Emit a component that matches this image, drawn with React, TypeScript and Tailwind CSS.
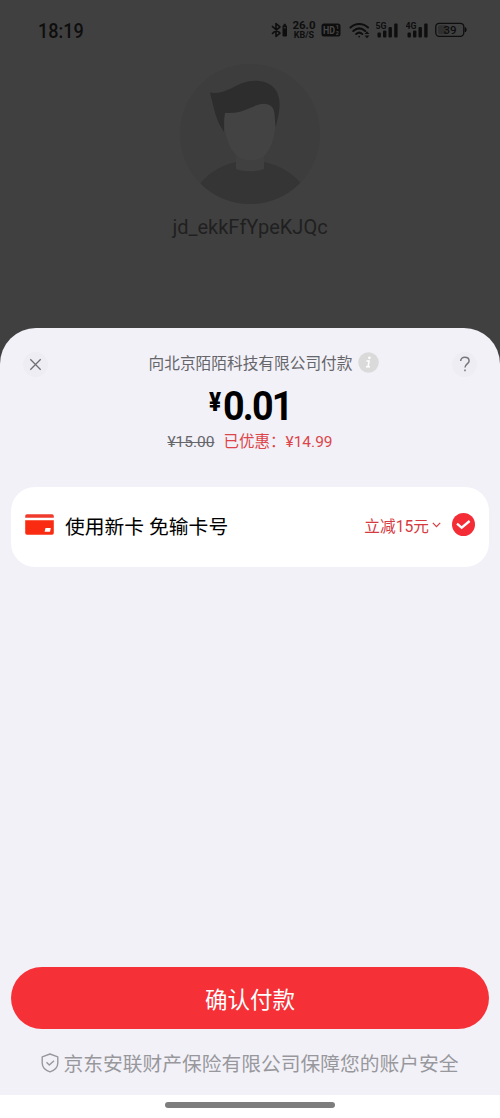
import React from 'react';

const SignalBars: React.FC<{ label: string }> = ({ label }) => (
  <svg width="22" height="18" viewBox="0 0 22 18" fill="#0e0e0e" className="block">
    <text x="-0.5" y="7.5" fontSize="9.5" fontWeight="700" fontFamily="Roboto, sans-serif" textLength="11" lengthAdjust="spacingAndGlyphs">{label}</text>
    <rect x="1.5" y="11.5" width="3.4" height="5" rx="1" />
    <rect x="7" y="9.5" width="3.4" height="7" rx="1" />
    <rect x="12.5" y="6" width="3.4" height="10.5" rx="1" />
    <rect x="18.2" y="2.5" width="3.4" height="14" rx="1" />
  </svg>
);

const StatusBar: React.FC = () => (
  <div className="h-[60px] pl-[38px] pr-[33px] flex items-center justify-between text-[#0e0e0e]">
    <span className="font-['Roboto',sans-serif] font-medium text-[20px] leading-none w-[60px] origin-left scale-x-[0.9] pt-px">18:19</span>
    <div className="flex items-center">
      {/* Bluetooth with device battery */}
      <svg width="18" height="16" viewBox="0 0 18 16" fill="none" stroke="#0e0e0e" strokeWidth="1.6" className="mr-[3px]">
        <path d="M1 4.2 L9 11.2 L5 14.5 V1.5 L9 4.8 L1 11.8" strokeLinejoin="round" />
        <rect x="11.5" y="3.2" width="4.5" height="11.3" rx="1.3" fill="#0e0e0e" stroke="none" />
        <rect x="12.7" y="1.8" width="2.1" height="2" fill="#0e0e0e" stroke="none" />
        <path d="M12.7 5.8 H14.8" stroke="#404040" strokeWidth="1" />
      </svg>
      <div className="w-[24px] font-['Roboto',sans-serif] font-bold flex flex-col items-center mr-[5px]">
        <span className="text-[11.5px] leading-[10px]">26.0</span>
        <span className="text-[9px] leading-[9px] pt-px">KB/S</span>
      </div>
      <svg width="20" height="14" viewBox="0 0 20 14" className="mr-[8px]">
        <rect x="0.5" y="0.5" width="19" height="13" rx="2.5" fill="#0e0e0e" />
        <text x="2" y="10.6" fontSize="10" fontWeight="700" fill="#484848" fontFamily="Roboto, sans-serif" textLength="12" lengthAdjust="spacingAndGlyphs">HD</text>
        <text x="14.8" y="6.4" fontSize="5.5" fontWeight="700" fill="#484848" fontFamily="Roboto, sans-serif">1</text>
        <text x="14.8" y="11.8" fontSize="5.5" fontWeight="700" fill="#484848" fontFamily="Roboto, sans-serif">2</text>
      </svg>
      <svg width="22" height="17" viewBox="0 0 22 17" fill="none" stroke="#0e0e0e" strokeWidth="2.1" strokeLinecap="round" className="mr-[5px]">
        <path d="M1.5 5.5 C6.5 0.8 14 0.8 19 5.5" />
        <path d="M4.3 9 C8 5.7 12.5 5.7 16.2 9" />
        <path d="M7.2 12 C9 10.5 11.5 10.5 13.2 12" />
        <circle cx="10.2" cy="14.6" r="0.9" fill="#0e0e0e" stroke="none" />
        <path d="M18 9.2 L20.4 12 H15.6 Z M15.6 13.4 H20.4 L18 16.2 Z" fill="#0e0e0e" stroke="none" />
      </svg>
      <div className="mr-[8px]"><SignalBars label="5G" /></div>
      <div className="mr-[7px]"><SignalBars label="4G" /></div>
      <svg width="32" height="16" viewBox="0 0 32 16">
        <rect x="0.8" y="1.3" width="28" height="13" rx="3.5" fill="none" stroke="#0e0e0e" strokeWidth="1.3" />
        <rect x="3" y="3.3" width="9" height="9" rx="1.8" fill="#222" opacity="0.55" />
        <path d="M30.2 5.5 C31.5 6.5 31.5 9 30.2 10 Z" fill="#0e0e0e" stroke="#0e0e0e" />
        <text x="8.5" y="11.8" fontSize="11" fontWeight="500" fill="#0e0e0e" fontFamily="Roboto, sans-serif" textLength="13" lengthAdjust="spacingAndGlyphs">39</text>
      </svg>
    </div>
  </div>
);

const Avatar: React.FC = () => (
  <svg width="140" height="140" viewBox="0 0 140 140" className="block">
    <defs>
      <clipPath id="avatarClip">
        <circle cx="70" cy="70" r="70" />
      </clipPath>
    </defs>
    <g clipPath="url(#avatarClip)">
      <rect width="140" height="140" fill="#3d3d3d" />
      <path d="M15 127 C25 111 38 102 56 98 H84 C102 102 115 110 127 127 V140 H15 Z" fill="#353535" />
      <path d="M56 82 H84 V105 C77 108 63 108 56 105 Z" fill="#404040" />
      <path d="M44 46 L60 30 H88 L95 46 C97 66 93 84 84 92 C77 98 63 98 56 91 C47 82 43 66 44 46 Z" fill="#434343" />
      <path d="M30 28.5 C36 30 44 28 52 24 C61 19 69 16 79 17 C92 18 99 27 99.5 38 C100 49 97 55 96 63 C94 55 96 46 91 42 C83 36 74 43 65 46 C58 49 51 49 45 49 C44 55 44 60 44 68 C36 57 34 45 30 28.5 Z" fill="#2d2d2d" />
    </g>
  </svg>
);

const PaySheet: React.FC = () => (
  <div className="flex-1 flex flex-col bg-[#f2f1f8] rounded-t-[36px] px-[11px]">
    {/* Title row */}
    <div className="mt-[23px] h-[26px] flex items-center justify-between pl-[12px] pr-[12px]">
      <button className="w-[25px] h-[25px] rounded-full bg-[#eeedf3] flex items-center justify-center">
        <svg width="13" height="13" viewBox="0 0 13 13" fill="none" stroke="#6f6f74" strokeWidth="1.3">
          <path d="M1.3 1.3 L11.7 11.7 M11.7 1.3 L1.3 11.7" />
        </svg>
      </button>
      <div className="flex items-center ml-[28px]">
        <span className="text-[15.7px] leading-[24px] text-[#66666a] whitespace-nowrap">向北京陌陌科技有限公司付款</span>
        <svg width="21" height="21" viewBox="0 0 21 21" className="ml-[6px] -mt-[3px]">
          <circle cx="10.5" cy="10.5" r="10.3" fill="#dadada" />
          <circle cx="11.4" cy="5.8" r="1.35" fill="#fff" />
          <path d="M8.5 9.1 H11.1 L10 14.8 H12 M8 14.8 H10" fill="none" stroke="#fff" strokeWidth="1.5" />
        </svg>
      </div>
      <button className="w-[25px] h-[25px] rounded-full bg-[#eeedf3] flex items-center justify-center">
        <svg width="12" height="16" viewBox="0 0 12 16" fill="none" stroke="#77777b" strokeWidth="1.5">
          <path d="M1.7 5 C1.7 2.6 3.4 1.2 5.8 1.2 C8.3 1.2 10.1 2.7 10.1 4.9 C10.1 7.6 6 8.2 6 11.4" />
          <path d="M6 13.5 V15.2" />
        </svg>
      </button>
    </div>

    {/* Amount */}
    <div className="h-[46px] mt-[6px] mb-px flex justify-center font-['Roboto',sans-serif] font-bold text-black">
      <div className="w-[83px] flex whitespace-nowrap">
        <span className="text-[26px] leading-[38px] w-[16px] origin-left scale-x-[0.86] font-black">¥</span>
        <span className="text-[41px] leading-[46px] origin-left scale-x-[0.92] tracking-[-2px]">0.01</span>
      </div>
    </div>
    <div className="h-[24px] flex items-center justify-center text-[15.5px] leading-[24px] whitespace-nowrap">
      <span className="text-[#66666a] line-through mr-[9px] -mt-px">¥15.00</span>
      <span className="text-[#dc4549] -mt-px">已优惠：¥14.99</span>
    </div>

    {/* Payment method */}
    <div className="mt-[33px] h-[80px] rounded-[24px] bg-white flex items-center pl-[14px] pr-[14px] pb-[5px]">
      <svg width="29" height="21" viewBox="0 0 29 21" className="mr-[11px]">
        <path d="M2 0.3 H27 Q28.8 0.3 28.8 2 V3.7 H0.2 V2 Q0.2 0.3 2 0.3 Z" fill="#f03a2c" />
        <path d="M0.2 6.2 H28.8 V18.8 Q28.8 20.7 27 20.7 H2 Q0.2 20.7 0.2 18.8 Z" fill="#f92c12" />
        <path d="M20.5 14 H25.8 L25 17.8 H19.6 Z" fill="#fff" />
      </svg>
      <span className="text-[19.8px] leading-[28px] pt-[6px] text-black">使用新卡 免输卡号</span>
      <div className="ml-auto flex items-center">
        <span className="text-[15.7px] leading-[24px] pt-[4px] text-[#d63a41]">立减15元</span>
        <svg width="9" height="6" viewBox="0 0 9 6" fill="none" stroke="#d63a41" strokeWidth="1.2" className="ml-[3px] mr-[11px]">
          <path d="M0.8 0.8 L4.5 4.6 L8.2 0.8" />
        </svg>
        <svg width="23" height="23" viewBox="0 0 23 23">
          <circle cx="11.5" cy="11.5" r="11.5" fill="#f42c36" />
          <path d="M5 10.6 L9.7 14.7 L17.6 8" fill="none" stroke="#fff" strokeWidth="2.3" />
        </svg>
      </div>
    </div>

    {/* Confirm */}
    <button className="mt-auto h-[62px] shrink-0 rounded-full bg-[#f53037] text-white text-[22.5px] leading-[32px] pt-[4px]">
      确认付款
    </button>
    <div className="mt-[19px] mb-[17px] h-[30px] flex items-center justify-center text-[#98989c]">
      <svg width="18" height="20" viewBox="0 0 18 20" fill="none" stroke="#98989c" strokeWidth="1.4" strokeLinejoin="round" className="mr-[4px]">
        <path d="M9 1 L16.8 3.8 V10 C16.8 14.5 13.5 17.3 9 18.9 C4.5 17.3 1.2 14.5 1.2 10 V3.8 Z" />
        <path d="M5.5 9.2 L8.3 12 L13 7.7" />
      </svg>
      <span className="text-[19.75px] leading-[30px] pt-[3px] whitespace-nowrap">京东安联财产保险有限公司保障您的账户安全</span>
    </div>
  </div>
);

export default function App() {
  return (
    <div className="w-[500px] h-[1118px] flex flex-col overflow-hidden bg-[#404040] font-['Roboto','Noto_Sans_CJK_SC',sans-serif]">
      <div className="h-[328px] shrink-0 flex flex-col">
        <StatusBar />
        <div className="flex flex-col items-center mt-[4px]">
          <Avatar />
          <span className="mt-[10px] text-[20px] leading-[26px] text-[#202020]">jd_ekkFfYpeKJQc</span>
        </div>
      </div>
      <PaySheet />
      {/* Gesture bar */}
      <div className="h-[23px] shrink-0 bg-white flex justify-center pt-[7px]">
        <div className="w-[170px] h-[6px] rounded-full bg-[#7d7d7d]" />
      </div>
    </div>
  );
}
